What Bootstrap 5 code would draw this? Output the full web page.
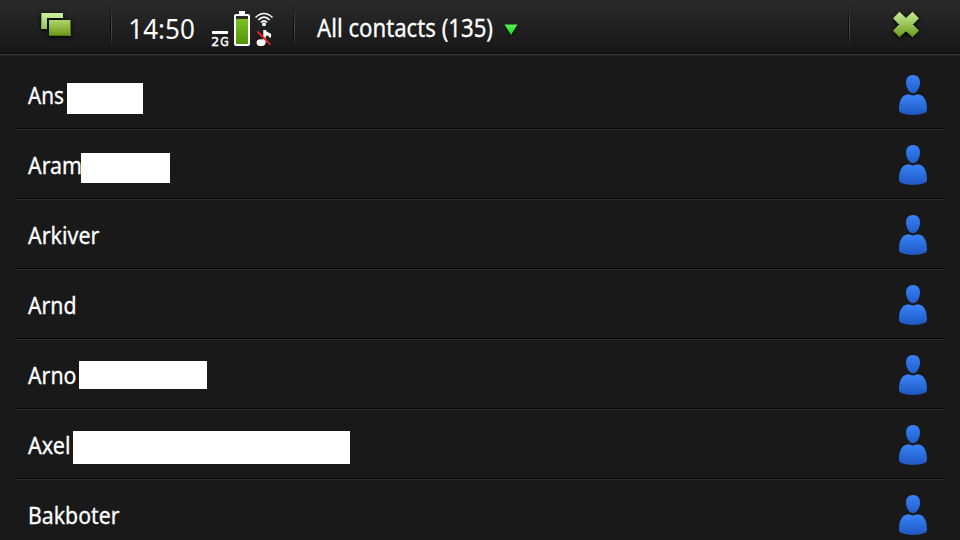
<!DOCTYPE html>
<html lang="en" data-bs-theme="dark">
<head>
<meta charset="utf-8">
<meta name="viewport" content="width=device-width, initial-scale=1">
<title>All contacts</title>
<link href="https://cdn.jsdelivr.net/npm/bootstrap@5.3.0/dist/css/bootstrap.min.css" rel="stylesheet">
<style>
body{background:#191919;font-family:"Noto Sans","Open Sans",sans-serif;height:540px;overflow:hidden}
svg{display:block;flex:none;overflow:visible}
svg text{fill:#fff;stroke:#fff;stroke-width:.3px}
svg .clock{stroke:none}
.topbar{height:55px;background:linear-gradient(#2a2a2a,#171717 53px);border-bottom:1px solid #3b3b3b;box-shadow:inset 0 -1px #0a0a0a,0 1px #222}
.tasks{width:110px}
.rule{width:2px;height:42px;margin-top:6px;background:linear-gradient(90deg,#0d0d0d 50%,#474747 50%);-webkit-mask:linear-gradient(transparent,#000 40%,#000 60%,transparent);mask:linear-gradient(transparent,#000 40%,#000 60%,transparent)}
.contacts{margin:5px 16px 0}
.contact{height:70px;border-bottom:1px solid #2c2c2c;box-shadow:inset 0 -1px #060606;padding:0 17px 0 12px}
.person{margin-top:15px}
.hidden-name{background:#fff}
</style>
<script src="https://cdn.jsdelivr.net/npm/bootstrap@5.3.0/dist/js/bootstrap.bundle.min.js"></script>
</head>
<body>
<svg width="0" height="0" class="position-absolute" aria-hidden="true">
<defs>
<linearGradient id="head" x1="0" y1="0" x2="0" y2="1"><stop offset="0" stop-color="#3983f8"/><stop offset="1" stop-color="#205dcb"/></linearGradient>
<linearGradient id="torso" x1="0" y1="0" x2="0" y2="1"><stop offset="0" stop-color="#3a84fa"/><stop offset="1" stop-color="#1e58c2"/></linearGradient>
<linearGradient id="green" x1="0" y1="0" x2="0" y2="1"><stop offset="0" stop-color="#c6eb93"/><stop offset="1" stop-color="#6d9a1e"/></linearGradient>
<linearGradient id="front" x1="0" y1="0" x2="0" y2="1"><stop offset="0" stop-color="#aed66c"/><stop offset="1" stop-color="#6c9615"/></linearGradient>
<linearGradient id="back" x1="0" y1="0" x2="0" y2="1"><stop offset="0" stop-color="#cdf2a0"/><stop offset="1" stop-color="#93c253"/></linearGradient>
<linearGradient id="cell" x1="0" y1="0" x2="0" y2="1"><stop offset="0" stop-color="#7cc225"/><stop offset="1" stop-color="#4f9507"/></linearGradient>
<linearGradient id="arrow" x1="0" y1="0" x2="0" y2="1"><stop offset="0" stop-color="#5cf05c"/><stop offset="1" stop-color="#09e60f"/></linearGradient>
<symbol id="person" viewBox="0 0 28 40"><path d="M14 0C18.500 0 21 3 21 7.500C21 12.500 18 18.200 14 18.200S7 12.500 7 7.500C7 3 9.500 0 14 0Z" fill="url(#head)"/><path d="M9.500 19.300Q14 21.500 18.500 19.300C25 19.700 28 25.500 28 34.500Q28 37.300 25 38.300Q20 39.900 14 39.900T3 38.300Q0 37.300 0 34.500C0 25.500 3 19.700 9.500 19.300Z" fill="url(#torso)"/></symbol>
</defs>
</svg>
<header class="topbar d-flex">
<div class="tasks"><svg width="110" height="53" style="filter:drop-shadow(0 1px 2px #000)"><path d="M41 13H63V18H47V29H41Z" fill="url(#back)"/><path d="M41.500 13V29" stroke="#7ea34b"/><rect x="49" y="20" width="22" height="16" fill="url(#front)"/><path d="M49 35.500H70.500V20" fill="none" stroke="#527412"/></svg></div>
<div class="rule"></div>
<div><svg width="181" height="53" viewBox="112 0 181 53">
<text class="clock" x="128.300" y="39" font-size="27.500" textLength="66.500" lengthAdjust="spacingAndGlyphs">14:50</text>
<path d="M212 31H228V34H212Z" fill="#fff"/>
<text x="211.200" y="46" font-size="12.500" textLength="8" lengthAdjust="spacingAndGlyphs" style="font-family:'DejaVu Sans';stroke-width:.5px">2</text>
<text x="220.300" y="46" font-size="12.500" textLength="8.500" lengthAdjust="spacingAndGlyphs" style="font-family:'DejaVu Sans';stroke-width:.5px">G</text>
<path d="M239 11h6v3h3q2 0 2 2v28q0 2-2 2h-12q-2 0-2-2V16q0-2 2-2h3z" fill="#fff"/><rect x="236" y="16" width="12" height="28" fill="#2c3125"/><rect x="236" y="19" width="12" height="25" fill="url(#cell)"/>
<g fill="none" stroke="#fff" stroke-width="1.600"><path d="M255.500 17.500Q264 9.500 272.500 17.500"/><path d="M258.200 20Q264 14.300 269.800 20"/><path d="M260.800 22.500Q264 19.300 267.200 22.500"/></g><circle cx="264" cy="24.300" r="2" fill="#fff"/>
<path d="M263.300 30H265.800Q266.500 32.300 269 32.800Q271.500 33.300 271.200 36Q271 37.800 269.500 38Q269.500 35.600 265.800 35.500V42.700H263.300Z" fill="#fff"/><ellipse cx="261" cy="42.700" rx="4.400" ry="3.400" fill="#fff"/><path d="M257.500 31.500L270.500 44.700" stroke="#e82020" stroke-width="1.900"/>
</svg></div>
<div class="rule"></div>
<div class="flex-grow-1"><svg width="553" height="53" viewBox="295 0 553 53"><text x="317" y="37" font-size="24.500" textLength="176" lengthAdjust="spacingAndGlyphs">All contacts (135)</text><path d="M504.500 24.500H517.500L511 35Z" fill="url(#arrow)" style="filter:drop-shadow(0 1px 1px #000)"/></svg></div>
<div class="rule"></div>
<div><svg width="110" height="53" viewBox="850 0 110 53" style="filter:drop-shadow(0 1px 2px #000)"><path d="M899.500 12.300L906 18.500L912.500 12.300L918.500 18.200L912.500 24.500L918.500 30.800L912.500 36.700L906 30.700L899.500 36.700L893.500 30.800L899.500 24.500L893.500 18.200Z" fill="url(#green)" stroke="url(#green)" stroke-width="1" stroke-linejoin="round"/></svg></div>
</header>
<main class="contacts">
<div class="contact d-flex"><svg width="36" height="69"><text y="44" font-size="24" textLength="36" lengthAdjust="spacingAndGlyphs">Ans</text></svg><span class="hidden-name" style="width:76px;height:31px;margin:23px 0 0 3px"></span><svg class="person ms-auto" width="28" height="40"><use href="#person"/></svg></div>
<div class="contact d-flex"><svg width="53" height="69"><text y="44" font-size="24" textLength="54" lengthAdjust="spacingAndGlyphs">Aram</text></svg><span class="hidden-name position-relative" style="width:89px;height:30px;margin-top:23px"></span><svg class="person ms-auto" width="28" height="40"><use href="#person"/></svg></div>
<div class="contact d-flex"><svg width="72" height="69"><text y="44" font-size="24" textLength="71.500" lengthAdjust="spacingAndGlyphs">Arkiver</text></svg><svg class="person ms-auto" width="28" height="40"><use href="#person"/></svg></div>
<div class="contact d-flex"><svg width="49" height="69"><text y="44" font-size="24" textLength="48.500" lengthAdjust="spacingAndGlyphs">Arnd</text></svg><svg class="person ms-auto" width="28" height="40"><use href="#person"/></svg></div>
<div class="contact d-flex"><svg width="49" height="69"><text y="44" font-size="24" textLength="48.500" lengthAdjust="spacingAndGlyphs">Arno</text></svg><span class="hidden-name" style="width:128px;height:28px;margin:21px 0 0 2px"></span><svg class="person ms-auto" width="28" height="40"><use href="#person"/></svg></div>
<div class="contact d-flex"><svg width="43" height="69"><text y="44" font-size="24" textLength="42.500" lengthAdjust="spacingAndGlyphs">Axel</text></svg><span class="hidden-name" style="width:277px;height:33px;margin:21px 0 0 2px"></span><svg class="person ms-auto" width="28" height="40"><use href="#person"/></svg></div>
<div class="contact d-flex"><svg width="92" height="69"><text y="44" font-size="24" textLength="91.500" lengthAdjust="spacingAndGlyphs">Bakboter</text></svg><svg class="person ms-auto" width="28" height="40"><use href="#person"/></svg></div>
</main>
</body>
</html>
